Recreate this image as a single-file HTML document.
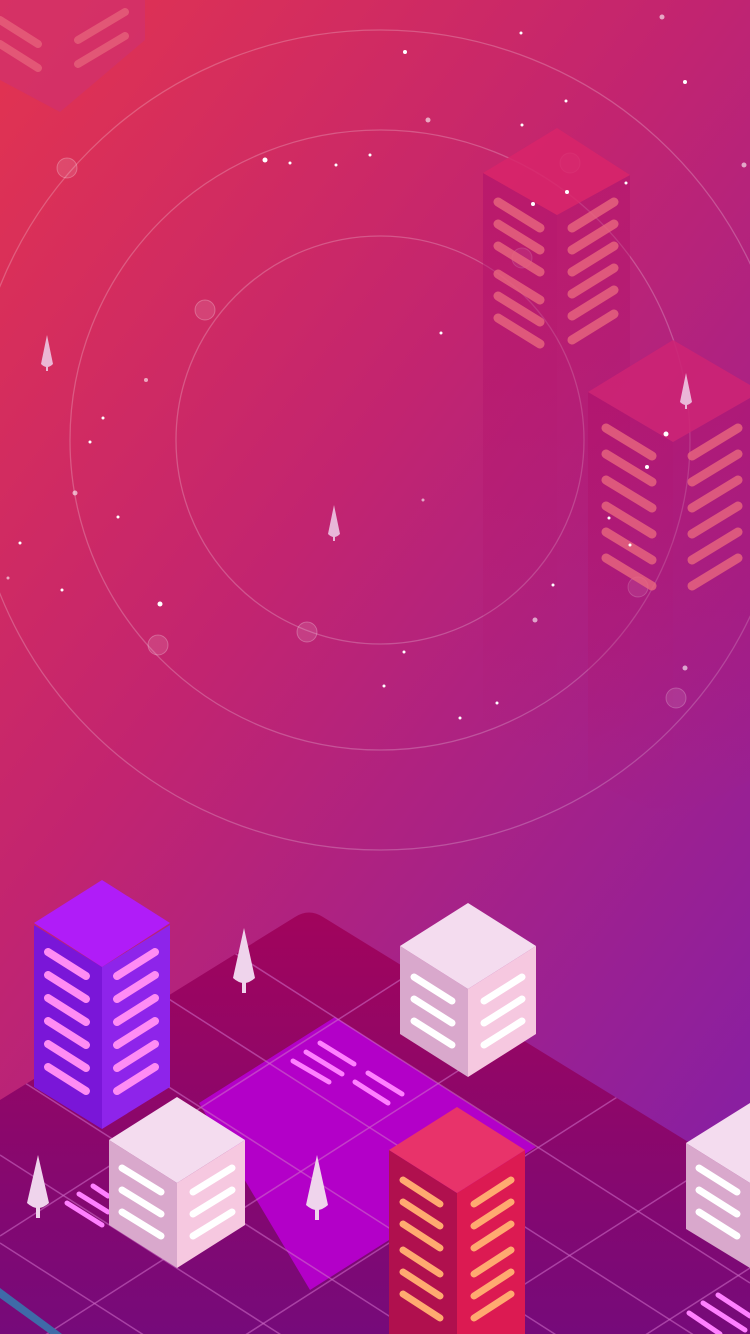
<!DOCTYPE html>
<html><head><meta charset="utf-8"><style>html,body{margin:0;padding:0;width:750px;height:1334px;overflow:hidden}svg{display:block;overflow:hidden}</style></head>
<body>
<svg width="750" height="1334" viewBox="0 0 750 1334" xmlns="http://www.w3.org/2000/svg">
<defs>
<linearGradient id="bg" x1="0" y1="0" x2="0.75" y2="1">
<stop offset="0" stop-color="#e3344f"/><stop offset="0.45" stop-color="#c22470"/><stop offset="1" stop-color="#8a1fa0"/>
</linearGradient>
<linearGradient id="plat" x1="0" y1="0" x2="0" y2="1">
<stop offset="0" stop-color="#a1045c"/><stop offset="1" stop-color="#760a7a"/>
</linearGradient>
<linearGradient id="fade" x1="0" y1="0" x2="0" y2="1">
<stop offset="0" stop-color="#b0106a" stop-opacity="0.55"/><stop offset="1" stop-color="#b0106a" stop-opacity="0"/>
</linearGradient>
<clipPath id="pc"><path d="M0,1100 L295,917 Q309,908 323,917 L750,1180 L750,1334 L0,1334 Z"/></clipPath>
</defs>
<rect width="750" height="1334" fill="url(#bg)"/>
<g fill="none" stroke="#ffffff" stroke-opacity="0.22" stroke-width="1.3">
<circle cx="380" cy="440" r="204"/>
<circle cx="380" cy="440" r="310"/>
<circle cx="380" cy="440" r="410"/>
</g>
<g fill="#fff" fill-opacity="0.12" stroke="#fff" stroke-opacity="0.25">
<circle cx="67" cy="168" r="10"/><circle cx="205" cy="310" r="10"/><circle cx="307" cy="632" r="10"/><circle cx="158" cy="645" r="10"/><circle cx="570" cy="163" r="10"/><circle cx="676" cy="698" r="10"/><circle cx="638" cy="587" r="10"/><circle cx="522" cy="258" r="10"/>
</g>
<g>
<polygon points="483,173 557,215 557,760 483,720" fill="url(#fade)"/>
<polygon points="557,215 630,175 630,720 557,760" fill="url(#fade)" opacity="0.8"/>
<polygon points="557,128 630,175 557,215 483,173" fill="#d8246a" opacity="0.85"/>
<g stroke="#e8687e" stroke-width="9" stroke-opacity="0.8" stroke-linecap="round">
<line x1="498" y1="202" x2="540" y2="228"/><line x1="498" y1="224" x2="540" y2="250"/><line x1="498" y1="246" x2="540" y2="272"/><line x1="498" y1="274" x2="540" y2="300"/><line x1="498" y1="296" x2="540" y2="322"/><line x1="498" y1="318" x2="540" y2="344"/>
<line x1="572" y1="228" x2="614" y2="202"/><line x1="572" y1="250" x2="614" y2="224"/><line x1="572" y1="272" x2="614" y2="246"/><line x1="572" y1="294" x2="614" y2="268"/><line x1="572" y1="316" x2="614" y2="290"/><line x1="572" y1="340" x2="614" y2="314"/>
</g>
<polygon points="588,392 673,442 673,820 588,780" fill="url(#fade)"/>
<polygon points="673,442 750,398 750,780 673,820" fill="url(#fade)" opacity="0.8"/>
<polygon points="673,340 750,385 750,398 673,442 588,392" fill="#cc2474" opacity="0.9"/>
<g stroke="#e8687e" stroke-width="9" stroke-opacity="0.8" stroke-linecap="round">
<line x1="606" y1="428" x2="652" y2="456"/><line x1="606" y1="454" x2="652" y2="482"/><line x1="606" y1="480" x2="652" y2="508"/><line x1="606" y1="506" x2="652" y2="534"/><line x1="606" y1="532" x2="652" y2="560"/><line x1="606" y1="558" x2="652" y2="586"/>
<line x1="692" y1="456" x2="738" y2="428"/><line x1="692" y1="482" x2="738" y2="454"/><line x1="692" y1="508" x2="738" y2="480"/><line x1="692" y1="534" x2="738" y2="506"/><line x1="692" y1="560" x2="738" y2="532"/><line x1="692" y1="586" x2="738" y2="558"/>
</g>
<polygon points="0,0 145,0 145,40 60,112 0,80" fill="#d0306e" opacity="0.7"/>
<g stroke="#e8687e" stroke-width="8" stroke-opacity="0.7" stroke-linecap="round">
<line x1="0" y1="20" x2="38" y2="44"/><line x1="0" y1="44" x2="38" y2="68"/><line x1="78" y1="40" x2="125" y2="12"/><line x1="78" y1="64" x2="125" y2="36"/>
</g>
</g>
<g fill="#fff">
<circle cx="405" cy="52" r="2"/><circle cx="521" cy="33" r="1.5"/><circle cx="662" cy="17" r="2.5" fill-opacity="0.6"/><circle cx="685" cy="82" r="2"/><circle cx="566" cy="101" r="1.5"/><circle cx="428" cy="120" r="2.5" fill-opacity="0.6"/><circle cx="522" cy="125" r="1.5"/><circle cx="370" cy="155" r="1.5"/><circle cx="265" cy="160" r="2.5"/><circle cx="290" cy="163" r="1.5"/><circle cx="336" cy="165" r="1.5"/><circle cx="567" cy="192" r="2"/><circle cx="533" cy="204" r="2"/><circle cx="626" cy="183" r="1.5"/><circle cx="744" cy="165" r="2.5" fill-opacity="0.6"/><circle cx="441" cy="333" r="1.5"/><circle cx="146" cy="380" r="2" fill-opacity="0.6"/><circle cx="103" cy="418" r="1.5"/><circle cx="90" cy="442" r="1.5"/><circle cx="666" cy="434" r="2.5"/><circle cx="647" cy="467" r="2"/><circle cx="75" cy="493" r="2.5" fill-opacity="0.6"/><circle cx="423" cy="500" r="1.5" fill-opacity="0.6"/><circle cx="118" cy="517" r="1.5"/><circle cx="609" cy="518" r="1.5"/><circle cx="20" cy="543" r="1.5"/><circle cx="630" cy="545" r="1.5"/><circle cx="62" cy="590" r="1.5"/><circle cx="160" cy="604" r="2.5"/><circle cx="553" cy="585" r="1.5"/><circle cx="535" cy="620" r="2.5" fill-opacity="0.6"/><circle cx="404" cy="652" r="1.5"/><circle cx="685" cy="668" r="2.5" fill-opacity="0.6"/><circle cx="384" cy="686" r="1.5"/><circle cx="497" cy="703" r="1.5"/><circle cx="460" cy="718" r="1.5"/><circle cx="8" cy="578" r="1.5" fill-opacity="0.6"/>
</g>
<g fill="#f0d0ea" opacity="0.85">
<path d="M47,335 L53,364 Q47,370 41,364 Z"/><rect x="46" y="364" width="2" height="7"/>
<path d="M334,505 L340,534 Q334,540 328,534 Z"/><rect x="333" y="534" width="2" height="7"/>
<path d="M686,373 L692,402 Q686,408 680,402 Z"/><rect x="685" y="402" width="2" height="7"/>
</g>
<!-- platform -->
<path d="M0,1100 L295,917 Q309,908 323,917 L750,1180 L750,1334 L0,1334 Z" fill="url(#plat)"/>
<g clip-path="url(#pc)">
<polygon points="335,1017 536,1147 310,1290 199,1103" fill="#b300c8"/>
<g stroke="#d070c8" stroke-opacity="0.55" stroke-width="1.5">
<line x1="0" y1="803" x2="750" y2="1283"/>
<line x1="0" y1="891" x2="750" y2="1371"/>
<line x1="0" y1="979" x2="750" y2="1459"/>
<line x1="0" y1="1067" x2="750" y2="1547"/>
<line x1="0" y1="1155" x2="750" y2="1635"/>
<line x1="0" y1="1243" x2="750" y2="1723"/>
<line x1="0" y1="1236" x2="750" y2="756"/>
<line x1="0" y1="1364" x2="750" y2="884"/>
<line x1="0" y1="1492" x2="750" y2="1012"/>
<line x1="0" y1="1620" x2="750" y2="1140"/>
<line x1="0" y1="1748" x2="750" y2="1268"/>
<line x1="0" y1="1876" x2="750" y2="1396"/>
</g>
</g>
<path d="M0,1288 L62,1334 L50,1334 L0,1298 Z" fill="#3f6aa8"/>
<g stroke="#ff80ff" stroke-width="5" stroke-linecap="round">
<line x1="320" y1="1043" x2="354" y2="1064"/><line x1="306" y1="1052" x2="342" y2="1074"/><line x1="293" y1="1061" x2="329" y2="1082"/>
<line x1="368" y1="1073" x2="402" y2="1094"/><line x1="355" y1="1082" x2="388" y2="1103"/>
<line x1="67" y1="1203" x2="102" y2="1225"/><line x1="79" y1="1194" x2="108" y2="1212"/><line x1="93" y1="1186" x2="108" y2="1196"/>
<line x1="689" y1="1313" x2="720" y2="1334"/><line x1="703" y1="1303" x2="745" y2="1330"/><line x1="718" y1="1295" x2="750" y2="1316"/>
</g>
<g fill="#efd4ec">
<path d="M244,928 L255,978 Q244,988 233,978 Z"/><rect x="242" y="980" width="4" height="13"/>
<path d="M38,1155 L49,1203 Q38,1213 27,1203 Z"/><rect x="36" y="1205" width="4" height="13"/>
<path d="M317,1155 L328,1205 Q317,1215 306,1205 Z"/><rect x="315" y="1207" width="4" height="13"/>
</g>
<polygon points="34,925 102,967 102,1129 34,1087" fill="#7a16d8"/>
<polygon points="102,967 170,925 170,1087 102,1129" fill="#8e24ea"/>
<polygon points="102,880 170,923 102,967 34,923" fill="#b01cf8"/>
<g stroke="#ff8cf4" stroke-width="8" stroke-linecap="round">
<line x1="48" y1="952" x2="86" y2="976"/><line x1="48" y1="975" x2="86" y2="999"/><line x1="48" y1="998" x2="86" y2="1022"/><line x1="48" y1="1021" x2="86" y2="1045"/><line x1="48" y1="1044" x2="86" y2="1068"/><line x1="48" y1="1067" x2="86" y2="1091"/>
<line x1="117" y1="976" x2="155" y2="952"/><line x1="117" y1="999" x2="155" y2="975"/><line x1="117" y1="1022" x2="155" y2="998"/><line x1="117" y1="1045" x2="155" y2="1021"/><line x1="117" y1="1068" x2="155" y2="1044"/><line x1="117" y1="1091" x2="155" y2="1067"/>
</g>
<polygon points="400,946 468,989 468,1077 400,1034" fill="#d9a8cc"/>
<polygon points="468,989 536,946 536,1034 468,1077" fill="#f6c8e0"/>
<polygon points="468,903 536,946 468,989 400,946" fill="#f4dcef"/>
<g stroke="#fff" stroke-width="7" stroke-linecap="round">
<line x1="414" y1="977" x2="452" y2="1001"/><line x1="414" y1="999" x2="452" y2="1023"/><line x1="414" y1="1021" x2="452" y2="1045"/>
<line x1="484" y1="1001" x2="522" y2="977"/><line x1="484" y1="1023" x2="522" y2="999"/><line x1="484" y1="1045" x2="522" y2="1021"/>
</g>
<polygon points="109,1140 177,1183 177,1268 109,1225" fill="#d9a8cc"/>
<polygon points="177,1183 245,1140 245,1225 177,1268" fill="#f6c8e0"/>
<polygon points="177,1097 245,1140 177,1183 109,1140" fill="#f4dcef"/>
<g stroke="#fff" stroke-width="7" stroke-linecap="round">
<line x1="122" y1="1168" x2="161" y2="1192"/><line x1="122" y1="1190" x2="161" y2="1214"/><line x1="122" y1="1212" x2="161" y2="1236"/>
<line x1="193" y1="1192" x2="232" y2="1168"/><line x1="193" y1="1214" x2="232" y2="1190"/><line x1="193" y1="1236" x2="232" y2="1212"/>
</g>
<polygon points="389,1150 457,1193 457,1334 389,1334" fill="#b0104e"/>
<polygon points="457,1193 525,1150 525,1334 457,1334" fill="#dc1a52"/>
<polygon points="457,1107 525,1150 457,1193 389,1150" fill="#e8336a"/>
<g stroke="#ffaa70" stroke-width="7" stroke-linecap="round">
<line x1="403" y1="1180" x2="440" y2="1204"/><line x1="403" y1="1202" x2="440" y2="1226"/><line x1="403" y1="1224" x2="440" y2="1248"/><line x1="403" y1="1250" x2="440" y2="1274"/><line x1="403" y1="1272" x2="440" y2="1296"/><line x1="403" y1="1294" x2="440" y2="1318"/>
<line x1="474" y1="1204" x2="511" y2="1180"/><line x1="474" y1="1226" x2="511" y2="1202"/><line x1="474" y1="1248" x2="511" y2="1224"/><line x1="474" y1="1274" x2="511" y2="1250"/><line x1="474" y1="1296" x2="511" y2="1272"/><line x1="474" y1="1318" x2="511" y2="1294"/>
</g>
<polygon points="686,1143 750,1183 750,1268 686,1229" fill="#d9a8cc"/>
<polygon points="750,1103 750,1183 686,1143" fill="#f4dcef"/>
<g stroke="#fff" stroke-width="7" stroke-linecap="round">
<line x1="699" y1="1168" x2="737" y2="1192"/><line x1="699" y1="1190" x2="737" y2="1214"/><line x1="699" y1="1212" x2="737" y2="1236"/>
</g>
</svg>
</body></html>
